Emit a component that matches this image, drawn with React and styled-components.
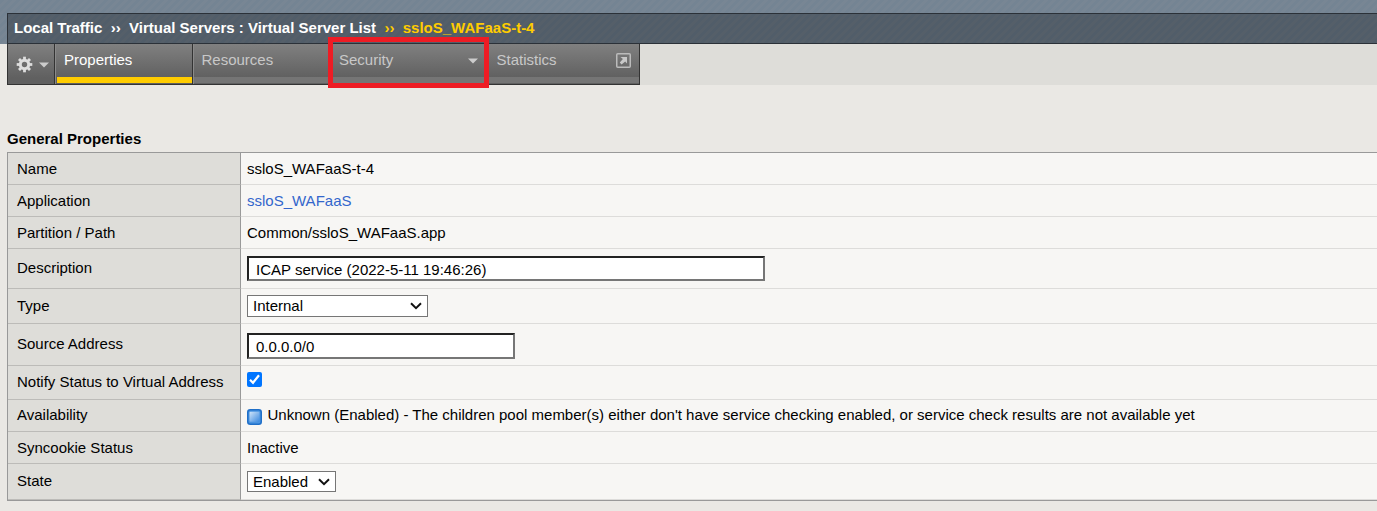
import React from 'react';
import styled, { createGlobalStyle } from 'styled-components';

const Global = createGlobalStyle`
  * { box-sizing: border-box; }
  body {
    margin: 0;
    background: #eae8e4;
    color: #000;
    font: 15px/18px "Liberation Sans", Arial, sans-serif;
    overflow: hidden;
  }
`;

const Page = styled.div`
  height: 511px;
  overflow: hidden;
`;

const Banner = styled.header`
  height: 44px;
  padding: 13px 0 0 7px;
  background: repeating-linear-gradient(135deg, #748493 0 2.83px, #788694 2.83px 5.66px);
`;

const Crumbs = styled.div`
  height: 31px;
  padding: 5px 0 0 6px;
  border: 1px solid #2b3138;
  border-right: 0;
  background: repeating-linear-gradient(135deg, #515d69 0 2.83px, #555f69 2.83px 5.66px);
  color: #fff;
  font-weight: bold;
  white-space: pre;
`;

const Current = styled.span`
  color: #fc0;
`;

const TabBar = styled.nav`
  display: flex;
  height: 41px;
  margin-left: 7px;
  background: #deddd9;
`;

const Tabs = styled.div`
  display: flex;
  border: 1px solid #333;
  border-top: 0;
  background: linear-gradient(#808080, #606060 85%, #606060);
`;

const Tab = styled.div`
  display: flex;
  justify-content: space-between;
  width: ${(p) => p.$width}px;
  padding: 7px 8px 0 ${(p) => p.$left ?? 8}px;
  border-left: 1px solid #8a8a8a;
  border-right: ${(p) => (p.$last ? 0 : 1)}px solid #333;
  background: linear-gradient(${(p) => (p.$active ? '#fc0, #fc0' : '#757575, #757575')}) ${(p) => (p.$active ? '1px' : '0')} 33px / 100% 6px no-repeat;
  color: ${(p) => (p.$active ? '#fff' : '#c8c8c8')};
`;

const GearTab = styled.div`
  display: flex;
  width: 47px;
  padding: 11.5px 0 0 7.5px;
  gap: 6px;
  border-right: 1px solid #333;
`;

const Caret = styled.svg`
  width: 10px;
  height: 6px;
  margin-top: ${(p) => p.$top}px;
  margin-right: 1px;
  fill: #ccc;
`;

const Main = styled.main`
  padding: 45px 0 0 7px;
`;

const Heading = styled.h2`
  height: 22px;
  margin: 0;
  font-size: 15px;
  line-height: 18px;
`;

const Table = styled.div`
  border: solid #999;
  border-width: 1px 0 1px 1px;
`;

const Row = styled.div`
  display: grid;
  grid-template-columns: 233px 1fr;
  height: ${(p) => p.$height}px;
`;

const Label = styled.div`
  padding: ${(p) => p.$top}px 0 0 9px;
  border-right: 1px solid #999;
  border-bottom: 1px solid #bcbbb8;
  background: #deddd9;
  white-space: nowrap;
`;

const Value = styled.div`
  display: flex;
  align-items: flex-start;
  padding: ${(p) => p.$top}px 0 0 6px;
  border-bottom: 1px solid #dddcda;
  background: #f7f6f4;
  white-space: nowrap;
`;

const Link = styled.a`
  color: #36c;
`;

const Input = styled.input`
  width: ${(p) => p.$width}px;
  height: ${(p) => p.$height}px;
  padding: ${(p) => (p.$height === 25 ? '2px 7px 0' : '1px 7px')};
  border: 2px solid;
  border-color: #222 #767676 #767676 #222;
  border-radius: 0;
  background: #fff;
  font: inherit;
  outline: 0;
`;

const Select = styled.div`
  display: flex;
  justify-content: space-between;
  align-items: center;
  width: ${(p) => p.$width}px;
  height: ${(p) => p.$height ?? 22}px;
  padding: 0 5px;
  border: 1px solid #767676;
  background: #fff;
`;

const Highlight = styled.div`
  position: absolute;
  left: 328px;
  top: 37px;
  width: 161px;
  height: 51px;
  border: 5px solid #ee1c24;
`;

const Status = styled.svg`
  margin: 3px 5.5px 0 0;
`;

const ExternalIcon = styled.svg`
  margin-top: 2px;
`;

const Gear = () => (
  <svg width="17" height="17" viewBox="-8.5 -8.5 17 17">
    <g fill="#ddd">
      {[0, 45, 90, 135, 180, 225, 270, 315].map((a) => (
        <rect key={a} x="-1.4" y="-7.8" width="2.8" height="4" transform={`rotate(${a})`} />
      ))}
    </g>
    <circle r="4.2" fill="none" stroke="#ddd" strokeWidth="3" />
  </svg>
);

const External = () => (
  <ExternalIcon width="15" height="15" viewBox="0 0 15 15">
    <rect x=".75" y=".75" width="13.5" height="13.5" rx="1" fill="none" stroke="#bbb" strokeWidth="1.5" />
    <path d="M4.5 4h6.5v6.5L9.2 8.6 5.6 11.5 3.8 9.6 6.9 6z" fill="#c8c8c8" />
  </ExternalIcon>
);

const Chevron = () => (
  <svg width="12" height="8" viewBox="0 0 12 8">
    <path d="M1 1.3l5 4.9 5-4.9" fill="none" stroke="#111" strokeWidth="2" />
  </svg>
);

const Arrow = ({ top }) => (
  <Caret $top={top} viewBox="0 0 10 6"><path d="M0 .5h10L5 5.5z" /></Caret>
);

const Check = () => (
  <svg width="15" height="15" viewBox="0 0 15 15" role="checkbox" aria-checked="true">
    <rect width="15" height="15" rx="2" fill="#0075ff" />
    <path d="M3 7.8l3 3 6-7.6" fill="none" stroke="#fff" strokeWidth="2.2" />
  </svg>
);

const StatusIcon = () => (
  <Status width="15" height="16" viewBox="0 0 15 16">
    <defs>
      <linearGradient id="blue" x1="0" y1="0" x2="1" y2="1">
        <stop offset="0" stopColor="#d0e4f8" />
        <stop offset="1" stopColor="#3b8ae0" />
      </linearGradient>
    </defs>
    <rect x=".75" y=".75" width="13.5" height="14.5" rx="2.5" fill="#4a94e0" stroke="#1f6fc8" strokeWidth="1.5" />
    <rect x="2.5" y="2.8" width="10" height="10" rx="1" fill="url(#blue)" />
  </Status>
);

const rows = [
  ['Name', 32, 7, 7, 'ssloS_WAFaaS-t-4'],
  ['Application', 32, 7, 7, <Link>ssloS_WAFaaS</Link>],
  ['Partition / Path', 32, 7, 7, 'Common/ssloS_WAFaaS.app'],
  ['Description', 40, 10, 7, <Input $width={518} $height={25} defaultValue="ICAP service (2022-5-11 19:46:26)" />],
  ['Type', 35, 8, 6, <Select $width={181}>Internal<Chevron /></Select>],
  ['Source Address', 42, 11, 9, <Input $width={268} $height={26} defaultValue="0.0.0.0/0" />],
  ['Notify Status to Virtual Address', 34, 7, 6, <Check />],
  ['Availability', 32, 6, 6, <><StatusIcon />Unknown (Enabled) - The children pool member(s) either don't have service checking enabled, or service check results are not available yet</>],
  ['Syncookie Status', 32, 7, 7, 'Inactive'],
  ['State', 36, 8, 7, <Select $width={89} $height={21}>Enabled<Chevron /></Select>],
];

export default function App() {
  return (
    <Page>
      <Global />
      <Banner>
        <Crumbs>Local Traffic  ››  Virtual Servers : Virtual Server List  <Current>››  ssloS_WAFaaS-t-4</Current></Crumbs>
      </Banner>
      <TabBar>
        <Tabs>
          <GearTab><Gear /><Arrow top={6} /></GearTab>
          <Tab $width={138} $active>Properties</Tab>
          <Tab $width={137} $left={7.5}>Resources</Tab>
          <Tab $width={158}>Security<Arrow top={7} /></Tab>
          <Tab $width={151} $left={7.5} $last>Statistics<External /></Tab>
        </Tabs>
      </TabBar>
      <Main>
        <Heading>General Properties</Heading>
        <Table>
          {rows.map(([label, height, labelTop, valueTop, value]) => (
            <Row key={label} $height={height}>
              <Label $top={labelTop}>{label}</Label>
              <Value $top={valueTop}>{value}</Value>
            </Row>
          ))}
        </Table>
      </Main>
      <Highlight />
    </Page>
  );
}
